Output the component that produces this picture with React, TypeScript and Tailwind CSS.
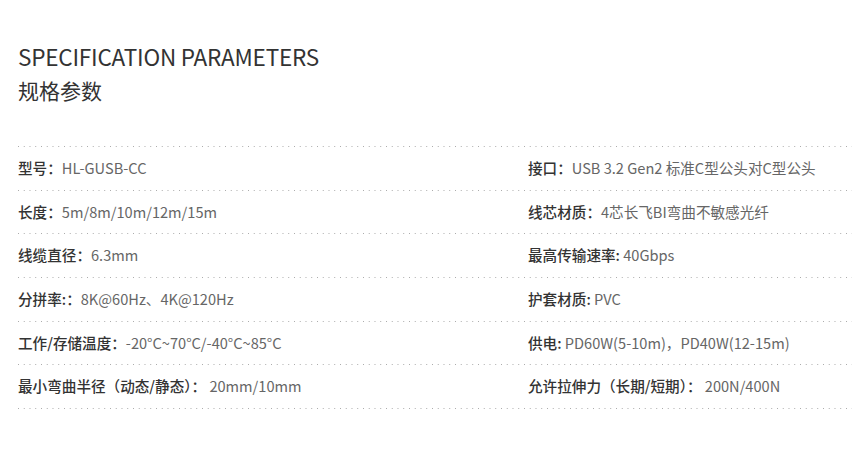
import React from 'react'

type Spec = { label: string; value: string }

const rows: [Spec, Spec][] = [
    [
        { label: '型号：', value: 'HL-GUSB-CC' },
        { label: '接口：', value: 'USB 3.2 Gen2 标准C型公头对C型公头' },
    ],
    [
        { label: '长度：', value: '5m/8m/10m/12m/15m' },
        { label: '线芯材质：', value: '4芯长飞BI弯曲不敏感光纤' },
    ],
    [
        { label: '线缆直径：', value: '6.3mm' },
        { label: '最高传输速率:', value: ' 40Gbps' },
    ],
    [
        { label: '分拼率:：', value: '8K@60Hz、4K@120Hz' },
        { label: '护套材质:', value: ' PVC' },
    ],
    [
        { label: '工作/存储温度：', value: '-20°C~70°C/-40°C~85°C' },
        { label: '供电:', value: ' PD60W(5-10m)，PD40W(12-15m)' },
    ],
    [
        { label: '最小弯曲半径（动态/静态）：', value: ' 20mm/10mm' },
        { label: '允许拉伸力（长期/短期）：', value: ' 200N/400N' },
    ],
]

const Dots = () => (
    <div className="h-px w-full bg-[linear-gradient(to_right,#aaa_1px,transparent_1px)] bg-[length:5.75px_1px] bg-repeat-x" />
)

const Cell = ({ spec }: { spec: Spec }) => (
    <p className="whitespace-pre text-[14.6px] leading-none">
        <span className="font-medium text-[#333]">{spec.label}</span>
        <span className="text-[#666]">{spec.value}</span>
    </p>
)

export default function App() {
    return (
        <div className="h-[461px] w-[856px] bg-white pl-[18px] pr-[4px] pt-[40px] font-['Noto_Sans_CJK_SC','Noto_Sans',sans-serif]">
            <div className="flex flex-col">
                <h1 className="text-[22.5px] font-normal leading-[32px] tracking-[-0.2px] text-[#333]">
                    SPECIFICATION PARAMETERS
                </h1>
                <h2 className="mt-[4px] text-[21px] font-normal leading-[28px] text-[#333]">规格参数</h2>
            </div>
            <div className="mt-[42px] flex flex-col">
                {rows.map(([left, right]) => (
                    <div key={left.label} className="flex flex-col">
                        <Dots />
                        <div className="grid h-[42.67px] grid-cols-[510px_1fr] items-center">
                            <Cell spec={left} />
                            <Cell spec={right} />
                        </div>
                    </div>
                ))}
                <Dots />
            </div>
        </div>
    )
}
